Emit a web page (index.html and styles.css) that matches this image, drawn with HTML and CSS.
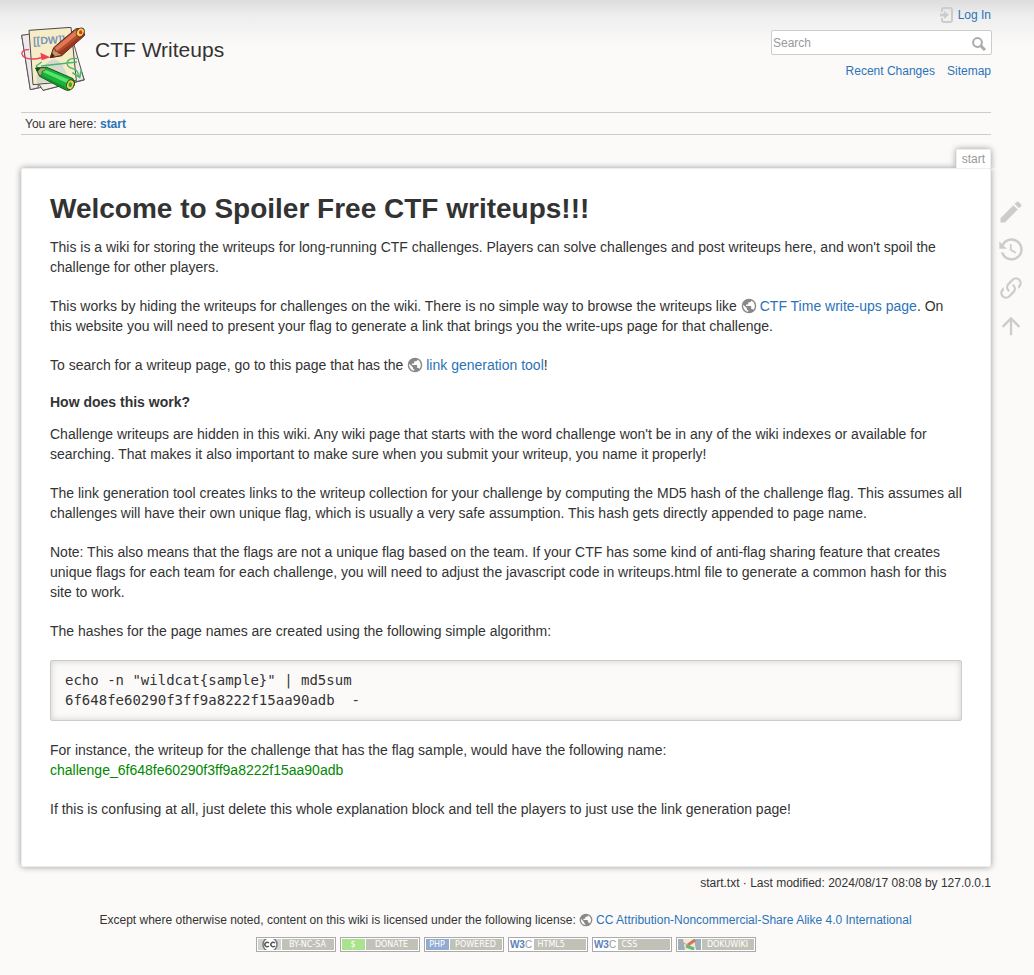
FILE: index.html
```html
<!DOCTYPE html>
<html lang="en">
<head>
<meta charset="utf-8">
<title>start [CTF Writeups]</title>
<meta name="viewport" content="width=device-width, initial-scale=1">
<link rel="stylesheet" href="styles.css">
</head>
<body>
<svg class="defs" aria-hidden="true">
  <symbol id="globe" viewBox="1 1 22 22"><path fill="#888" d="M17.9 17.39c-.26-.8-1.01-1.39-1.9-1.39h-1v-3a1 1 0 0 0-1-1H8v-2h2a1 1 0 0 0 1-1V7h2a2 2 0 0 0 2-2v-.41a7.98 7.98 0 0 1 2.9 12.8M11 19.93c-3.95-.49-7-3.85-7-7.93 0-.62.08-1.22.21-1.79L9 15v1a2 2 0 0 0 2 2m1-16A10 10 0 0 0 2 12a10 10 0 0 0 10 10 10 10 0 0 0 10-10A10 10 0 0 0 12 2z"/></symbol>
</svg>

<div class="site">
  <header class="header">
    <h1 class="brand">
      <a href="#" class="brand-link">
        <svg class="logo" viewBox="18 21 192 192" aria-hidden="true">
          <path d="M20 46 L160 36 L208 180 L84 211 L80 202 L46 209Z" fill="#eeeef1" stroke="#555" stroke-width="3"/>
          <path d="M176 70 L207 179 L84 211 L70 190" fill="#f1efe5" stroke="#555" stroke-width="3"/>
          <path d="M20 46 L60 40 L70 203 L46 209Z" fill="#f0e8ec" stroke="#555" stroke-width="3"/>
          <path d="M42 31 L168 22 L184 182 L54 194Z" fill="#f6edc8" stroke="#4a4a46" stroke-width="3"/>
          <path d="M92 132 Q118 104 142 134 L166 182 L66 190 Q58 156 92 132" fill="#cfd3cf" opacity=".8"/>
          <text x="55" y="74" class="logo-text" transform="rotate(-3 55 74)">[[DW]]</text>
          <path d="M42 89 C10 88 15 116 52 117 C70 118 78 112 92 110" fill="none" stroke="#ef4250" stroke-width="4"/>
          <path d="M76 98 L106 112 L80 121Z" fill="#ef4250"/>
          <path d="M78 138 L186 126 M80 126 L64 138 L70 147 M186 116 C160 112 146 130 164 142 C182 150 190 150 190 168" fill="none" stroke="#4cb56c" stroke-width="4"/>
          <path d="M172 158 L194 172 L199 150" fill="none" stroke="#4cb56c" stroke-width="5"/>
          <path d="M106 113 L116 83 L182 27 Q205 20 209 46 L140 107Z" fill="#b94a2b" stroke="#4b2015" stroke-width="3"/>
          <path d="M119 84 L184 30 L192 40 L125 94Z" fill="#df7957"/>
          <path d="M130 99 L200 45 L207 49 L140 105Z" fill="#943a20"/>
          <path d="M106 113 L116 84 Q121 88 121 93 Q130 93 130 99 Q140 99 140 106Z" fill="#c99465" stroke="#4b2015" stroke-width="2"/>
          <path d="M106 113 L111 99 L120 109Z" fill="#4b2015"/>
          <ellipse cx="196" cy="37" rx="11" ry="14" transform="rotate(35 196 37)" fill="#eed05b" stroke="#5b381d" stroke-width="3"/>
          <ellipse cx="197" cy="37" rx="5" ry="6" fill="#e13226"/>
          <path d="M62 144 L95 142 L174 176 Q187 196 165 210 Q156 214 144 206 L74 169Z" fill="#19b33b" stroke="#15501d" stroke-width="3"/>
          <path d="M88 148 L165 181 L157 190 L82 155Z" fill="#5ae36f"/>
          <path d="M76 164 L149 200 L154 208 L76 171Z" fill="#128d2b"/>
          <path d="M62 144 L94 143 Q91 153 82 154 Q83 165 74 168Z" fill="#a3ad68" stroke="#15501d" stroke-width="2"/>
          <path d="M62 144 L77 144 L67 156Z" fill="#174c20"/>
          <ellipse cx="166" cy="194" rx="11" ry="15" transform="rotate(20 166 194)" fill="#ecd04e" stroke="#304c1d" stroke-width="3"/>
          <ellipse cx="166" cy="194" rx="5" ry="7" fill="#22a83b"/>
        </svg>
        <span>CTF Writeups</span>
      </a>
    </h1>
    <div class="tools">
      <a href="#" class="login">
        <svg class="login-icon" viewBox="0 0 14 16" aria-hidden="true"><path d="M3 5V3Q3 1 5 1H11Q13 1 13 3V13Q13 15 11 15H5Q3 15 3 13V11" fill="none" stroke="#ccc" stroke-width="2"/><path d="M1 6.500H5V4L10 8L5 12V9.500H1Z" fill="#ccc"/></svg>
        <span>Log In</span>
      </a>
      <form class="search" role="search">
        <input class="search-input" type="search" placeholder="Search" aria-label="Search">
        <button class="search-button" type="button" aria-label="Search">
          <svg viewBox="0 0 14 14" aria-hidden="true"><circle cx="5.500" cy="5.500" r="4.400" fill="none" stroke="#aaa" stroke-width="2"/><path d="M8.500 8.500L13 13" stroke="#aaa" stroke-width="3"/></svg>
        </button>
      </form>
      <nav class="site-links" aria-label="Site tools"><a href="#">Recent Changes</a><a href="#">Sitemap</a></nav>
    </div>
  </header>

  <nav class="breadcrumbs" aria-label="Breadcrumbs">You are here: <a href="#">start</a></nav>

  <div class="main">
    <div class="page-id"><span>start</span></div>
    <main class="page">
      <h1>Welcome to Spoiler Free CTF writeups!!!</h1>
      <p>This is a wiki for storing the writeups for long-running CTF challenges. Players can solve challenges and post writeups here, and won't spoil the challenge for other players.</p>
      <p>This works by hiding the writeups for challenges on the wiki. There is no simple way to browse the writeups like <a href="#" class="external"><svg class="globe" aria-hidden="true"><use href="#globe"/></svg>CTF Time write-ups page</a>. On this website you will need to present your flag to generate a link that brings you the write-ups page for that challenge.</p>
      <p>To search for a writeup page, go to this page that has the <a href="#" class="external"><svg class="globe" aria-hidden="true"><use href="#globe"/></svg>link generation tool</a>!</p>
      <h4>How does this work?</h4>
      <p>Challenge writeups are hidden in this wiki. Any wiki page that starts with the word challenge won't be in any of the wiki indexes or available for searching. That makes it also important to make sure when you submit your writeup, you name it properly!</p>
      <p>The link generation tool creates links to the writeup collection for your challenge by computing the MD5 hash of the challenge flag. This assumes all challenges will have their own unique flag, which is usually a very safe assumption. This hash gets directly appended to page name.</p>
      <p>Note: This also means that the flags are not a unique flag based on the team. If your CTF has some kind of anti-flag sharing feature that creates unique flags for each team for each challenge, you will need to adjust the javascript code in writeups.html file to generate a common hash for this site to work.</p>
      <p>The hashes for the page names are created using the following simple algorithm:</p>
      <pre>echo -n "wildcat{sample}" | md5sum
6f648fe60290f3ff9a8222f15aa90adb  -</pre>
      <p>For instance, the writeup for the challenge that has the flag sample, would have the following name: <a href="#" class="wikilink">challenge_6f648fe60290f3ff9a8222f15aa90adb</a></p>
      <p>If this is confusing at all, just delete this whole explanation block and tell the players to just use the link generation page!</p>
    </main>
    <div class="doc-info">start.txt · Last modified: 2024/08/17 08:08 by 127.0.0.1</div>
    <nav class="page-tools" aria-label="Page tools">
      <a href="#" aria-label="Show page source"><svg viewBox="0 0 24 24"><path d="M20.71 7.04c.39-.39.39-1.040 0-1.410l-2.340-2.340c-.37-.39-1.020-.39-1.410 0l-1.840 1.830 3.750 3.750M3 17.250V21h3.750L17.810 9.930l-3.750-3.750L3 17.250z"/></svg></a>
      <a href="#" aria-label="Old revisions"><svg viewBox="0 0 24 24"><path d="M11 7v5.110l4.710 2.790.79-1.280-4-2.370V7m0-5C8.970 2 5.910 3.920 4.270 6.770L2 4.500V11h6.500L5.750 8.250C6.960 5.730 9.500 4 12.500 4a7.500 7.500 0 0 1 7.500 7.500 7.500 7.500 0 0 1-7.500 7.500c-3.270 0-6.030-2.090-7.060-5h-2.100c1.100 4.030 4.770 7 9.160 7 5.240 0 9.500-4.250 9.500-9.500A9.500 9.500 0 0 0 12.500 2z"/></svg></a>
      <a href="#" aria-label="Backlinks"><svg viewBox="0 0 24 24"><path d="M10.590 13.410c.41.39.41 1.030 0 1.420-.39.39-1.030.39-1.420 0a5.003 5.003 0 0 1 0-7.070l3.540-3.540a5.003 5.003 0 0 1 7.070 0 5.003 5.003 0 0 1 0 7.070l-1.490 1.490c.01-.82-.12-1.640-.4-2.420l.47-.48a2.982 2.982 0 0 0 0-4.240 2.982 2.982 0 0 0-4.240 0l-3.530 3.530a2.982 2.982 0 0 0 0 4.240m2.820-4.240c.39-.39 1.030-.39 1.420 0a5.003 5.003 0 0 1 0 7.070l-3.540 3.540a5.003 5.003 0 0 1-7.070 0 5.003 5.003 0 0 1 0-7.070l1.490-1.490c-.01.82.12 1.640.4 2.430l-.47.47a2.982 2.982 0 0 0 0 4.240 2.982 2.982 0 0 0 4.240 0l3.530-3.530a2.982 2.982 0 0 0 0-4.240.973.973 0 0 1 0-1.420z"/></svg></a>
      <a href="#" aria-label="Back to top"><svg viewBox="0 0 24 24"><path d="M13 20h-2V8l-5.500 5.500-1.420-1.420L12 4.160l7.920 7.920-1.420 1.420L13 8v12z"/></svg></a>
    </nav>
  </div>
</div>

<footer class="footer">
  <div class="license">Except where otherwise noted, content on this wiki is licensed under the following license: <a href="#" class="external"><svg class="globe" aria-hidden="true"><use href="#globe"/></svg>CC Attribution-Noncommercial-Share Alike 4.0 International</a></div>
  <div class="badges">
    <a href="#" class="badge"><svg class="badge-mark" viewBox="0 0 23 11" aria-hidden="true"><rect width="23" height="11" fill="#d0d3cf"/><circle cx="12" cy="5.500" r="7" fill="#fff" stroke="#777" stroke-width="1.500"/><path d="M11 4Q9 2.500 7.500 4T7.500 7Q9 8.500 11 7M17 4Q15 2.500 13.500 4T13.500 7Q15 8.500 17 7" fill="none" stroke="#555" stroke-width="1.500"/></svg><span class="badge-label">BY-NC-SA</span></a>
    <a href="#" class="badge"><span class="badge-mark green">$</span><span class="badge-label">DONATE</span></a>
    <a href="#" class="badge"><span class="badge-mark blue">PHP</span><span class="badge-label">POWERED</span></a>
    <a href="#" class="badge"><span class="badge-mark w3c"><b>W3</b>C</span><span class="badge-label start">HTML5</span></a>
    <a href="#" class="badge"><span class="badge-mark w3c"><b>W3</b>C</span><span class="badge-label start">CSS</span></a>
    <a href="#" class="badge"><svg class="badge-mark" viewBox="0 0 23 11" aria-hidden="true"><rect width="23" height="11" fill="#9eafb9"/><path d="M5 0H16L18 11H7Z" fill="#eeeadb"/><path d="M17 1L10 6" stroke="#d37460" stroke-width="3"/><path d="M8 7L16 10" stroke="#67b76e" stroke-width="3"/><path d="M5 4L10 6" stroke="#ed8780" stroke-width="1"/></svg><span class="badge-label">DOKUWIKI</span></a>
  </div>
</footer>
</body>
</html>
```
FILE: styles.css
```css
* { box-sizing: border-box; }

body {
  margin: 0;
  background: #fbfaf9 linear-gradient(#ddd 0, #eee 16px, #fbfaf9 46px) no-repeat;
  color: #333;
  font: 14px/20px "Liberation Sans", Arial, sans-serif;
}

a { color: #2b73b7; text-decoration: none; }
a:hover { text-decoration: underline; }

.defs { position: absolute; width: 0; height: 0; }
.logo-text { font: bold 32px "Liberation Sans", Arial, sans-serif; fill: #7897b6; }

.site { padding: 7px 43px 0 21px; }

/* Header */
.header {
  display: flex;
  justify-content: space-between;
  align-items: flex-start;
  padding-bottom: 21px;
}
.brand { margin: 20px 0 0; font-size: 21px; font-weight: normal; line-height: 28px; }
.brand-link { display: flex; gap: 10px; color: #333; }
.brand-link span { padding-top: 9px; }
.logo { width: 64px; height: 64px; }

.tools {
  display: flex;
  flex-direction: column;
  align-items: flex-end;
  font-size: 12px;
  line-height: 16px;
}
.login { display: flex; align-items: center; gap: 5px; }
.login-icon { width: 14px; height: 16px; }
.search {
  display: flex;
  align-items: center;
  width: 221px;
  height: 25px;
  margin: 7px -1px 8px 0;
  border: 1px solid #ccc;
  border-radius: 2px;
  background: #fff;
}
.search-input {
  flex: 1;
  min-width: 0;
  padding: 0 1px;
  border: 0;
  outline: 0;
  background: transparent;
  color: #333;
  font: inherit;
}
.search-input::placeholder { color: #999; }
.search-button {
  width: 24px;
  height: 23px;
  padding: 6px 5px 3px;
  border: 0;
  background: transparent;
}
.search-button svg { display: block; width: 14px; height: 14px; }
.site-links { display: flex; gap: 12px; }

.breadcrumbs {
  padding: 4px 4px 2px;
  border: solid #ccc;
  border-width: 1px 0;
  font-size: 12px;
  line-height: 15px;
}
.breadcrumbs a { font-weight: bold; }

/* Page */
.main { position: relative; margin-top: 14px; }
.page-id { display: flex; justify-content: flex-end; font-size: 12px; }
.page-id span {
  padding: 1px 5px 0;
  border: 1px solid #eee;
  border-bottom: 0;
  border-radius: 2px 2px 0 0;
  background: #fff;
  box-shadow: 0 0 6px #999;
  color: #999;
  line-height: 17px;
}
.page {
  position: relative;
  padding: 23px 28px 47px;
  border: 1px solid #eee;
  border-radius: 2px;
  background: #fff;
  box-shadow: 0 0 6px #999;
}
/* Keeps the tab joined to the page, without a shadow between them */
.page-id span { position: relative; z-index: 1; clip-path: inset(-8px -8px 0 -8px); }
.page h1 { margin: 0 0 11px; font-size: 28px; line-height: 34px; }
.page h4 { margin: -2px 0 12px; font-size: 14px; }
.page p { margin: 0 0 19px; }
.page p:last-child { margin: 0; }
.page pre {
  margin: 0 0 19px;
  padding: 9px 14px 10px;
  border: 1px solid #ccc;
  border-radius: 2px;
  background: #fbfaf9;
  box-shadow: inset 0 0 6px #ccc;
  font: 14px/20px "DejaVu Sans Mono", monospace;
  overflow: auto;
}
.globe { width: 16px; height: 16px; margin-right: 3px; vertical-align: -3px; }
.wikilink { color: #080; }

.doc-info { padding-top: 8px; font-size: 12px; line-height: 16px; text-align: right; }

.page-tools {
  position: absolute;
  top: 49px;
  right: -34px;
  display: flex;
  flex-direction: column;
  gap: 10px;
}
.page-tools svg { display: block; width: 28px; height: 28px; fill: #ccc; }

/* Footer */
.footer { padding: 21px 44px 23px 21px; font-size: 12px; line-height: 16px; text-align: center; }
.footer .globe { width: 14px; height: 14px; margin-right: 3px; }
.badges { display: flex; justify-content: center; gap: 4px; margin-top: 9px; }
.badge {
  display: flex;
  gap: 1px;
  width: 80px;
  height: 15px;
  padding: 1px;
  border: 1px solid #aaa;
  background: #fff;
  color: #fff;
  font: 8px/11px "DejaVu Sans", sans-serif;
}
.badge-mark { flex: none; width: 23px; height: 11px; overflow: hidden; }
.green { background: #a9e38f; }
.blue { background: #91acd0; }
.w3c { color: #999; font: 10px/11px "Liberation Sans", sans-serif; }
.w3c b { color: #5c82b9; }
.badge-label { flex: 1; overflow: hidden; background: #c1c2b7; }
.badge-label.start { padding-left: 4px; text-align: left; }
```
